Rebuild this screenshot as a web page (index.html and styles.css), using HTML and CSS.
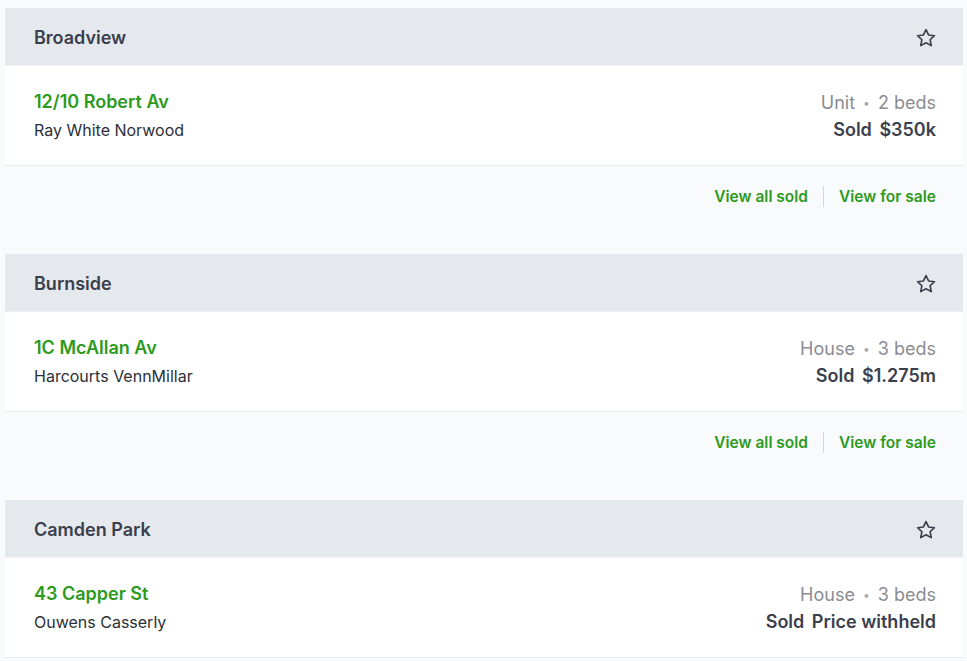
FILE: index.html
```html
<!DOCTYPE html>
<html>
  <head>
    <title>Recent sales</title>
    <link rel="stylesheet" href="styles.css">
  </head>
  <body>
    <div class="suburb">
      <div class="suburb_head">
        <span class="suburb_name">Broadview</span>
        <svg class="star" viewBox="0 0 24 24"><path d="M12 2.8l2.8 5.9 6.4.8-4.7 4.4 1.2 6.4L12 17.2l-5.7 3.1 1.2-6.4-4.7-4.4 6.4-.8z"/></svg>
      </div>
      <div class="listing">
        <div>
          <div class="address">12/10 Robert Av</div>
          <div class="agency">Ray White Norwood</div>
        </div>
        <div class="info">
          <div class="type">Unit <span class="dot">•</span> 2 beds</div>
          <div class="price">Sold <span>$350k</span></div>
        </div>
      </div>
      <div class="actions">
        <a href="#">View all sold</a>
        <span class="sep"></span>
        <a href="#">View for sale</a>
      </div>
    </div>

    <div class="suburb">
      <div class="suburb_head">
        <span class="suburb_name">Burnside</span>
        <svg class="star" viewBox="0 0 24 24"><path d="M12 2.8l2.8 5.9 6.4.8-4.7 4.4 1.2 6.4L12 17.2l-5.7 3.1 1.2-6.4-4.7-4.4 6.4-.8z"/></svg>
      </div>
      <div class="listing">
        <div>
          <div class="address">1C McAllan Av</div>
          <div class="agency">Harcourts VennMillar</div>
        </div>
        <div class="info">
          <div class="type">House <span class="dot">•</span> 3 beds</div>
          <div class="price">Sold <span>$1.275m</span></div>
        </div>
      </div>
      <div class="actions">
        <a href="#">View all sold</a>
        <span class="sep"></span>
        <a href="#">View for sale</a>
      </div>
    </div>

    <div class="suburb">
      <div class="suburb_head">
        <span class="suburb_name">Camden Park</span>
        <svg class="star" viewBox="0 0 24 24"><path d="M12 2.8l2.8 5.9 6.4.8-4.7 4.4 1.2 6.4L12 17.2l-5.7 3.1 1.2-6.4-4.7-4.4 6.4-.8z"/></svg>
      </div>
      <div class="listing">
        <div>
          <div class="address">43 Capper St</div>
          <div class="agency">Ouwens Casserly</div>
        </div>
        <div class="info">
          <div class="type">House <span class="dot">•</span> 3 beds</div>
          <div class="price">Sold <span>Price withheld</span></div>
        </div>
      </div>
    </div>
  </body>
</html>
```

FILE: styles.css
```css
body{
  margin:0;
  padding:8px 4px 0 5px;
  background:#f9fafc;
  font-family:Inter, "Noto Sans", sans-serif;
  color:#2b2f3a;
}
.suburb_head{
  display:flex;
  justify-content:space-between;
  align-items:center;
  height:57px;
  box-sizing:border-box;
  padding:2px 26px 0 29px;
  background:#e5e8ec;
}
.suburb_name{
  font-size:18px;
  font-weight:600;
  color:#3b3f4d;
}
.star{
  width:22px;
  height:22px;
  fill:none;
  stroke:#3b3f4d;
  stroke-width:1.8;
  stroke-linejoin:round;
}
.listing{
  display:flex;
  justify-content:space-between;
  align-items:center;
  height:99px;
  padding:0 27px 0 29px;
  background:#fff;
  border-top:1px solid #f1f2f4;
  border-bottom:1px solid #e6e8eb;
}
.address{
  font-size:18px;
  font-weight:600;
  color:#2c9a1d;
  margin-bottom:8px;
}
.agency{
  font-size:16px;
  color:#2b2f3a;
}
.info{
  text-align:right;
}
.type{
  font-size:18px;
  color:#8a8c91;
  margin-bottom:6px;
}
.dot{
  font-size:12px;
  color:#a8aaae;
  vertical-align:2px;
  margin:0 3px;
}
.price{
  font-size:18px;
  font-weight:600;
  color:#3b3f4d;
}
.price span{
  margin-left:3px;
}
.actions{
  display:flex;
  justify-content:flex-end;
  align-items:center;
  gap:15px;
  height:60px;
  padding:0 27px 28px 0;
}
.actions a{
  font-size:15.5px;
  font-weight:600;
  color:#2c9a1d;
  text-decoration:none;
}
.sep{
  width:1px;
  height:21px;
  background:#d3d6da;
}
```
